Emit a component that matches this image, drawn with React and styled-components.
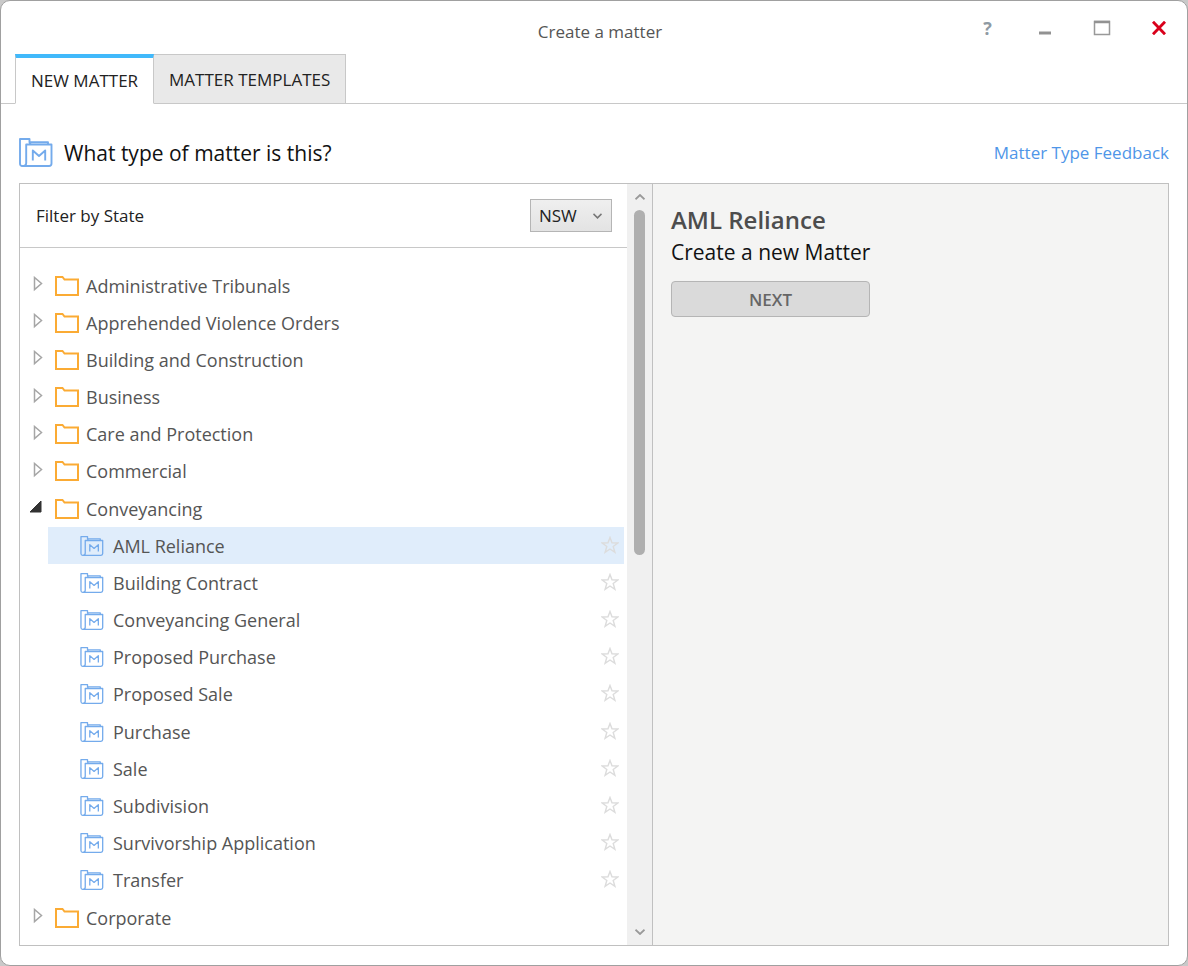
import React, { useState } from 'react'
import styled, { createGlobalStyle } from 'styled-components'

const folders = [
  { name: 'Administrative Tribunals' },
  { name: 'Apprehended Violence Orders' },
  { name: 'Building and Construction' },
  { name: 'Business' },
  { name: 'Care and Protection' },
  { name: 'Commercial' },
  {
    name: 'Conveyancing',
    matters: [
      'AML Reliance',
      'Building Contract',
      'Conveyancing General',
      'Proposed Purchase',
      'Proposed Sale',
      'Purchase',
      'Sale',
      'Subdivision',
      'Survivorship Application',
      'Transfer',
    ],
  },
  { name: 'Corporate' },
]

const MatterIcon = ({ width, height, stroke = 1.9 }) => (
  <svg width={width} height={height} viewBox="0 0 34 29" fill="none" stroke="#74abec" strokeWidth={stroke} strokeLinejoin="round" aria-hidden="true">
    <path d="M3.5 28C1.8 28 1 27 1 25.5V1h9.5v3.2H29V6.5" />
    <path d="M10.5 4.5 12 6.5h20.5v19c0 1.600-.9 2.500-2.500 2.500H3.500C6 28 7.200 27 7.200 25V6.500H30" />
    <path d="M13.800 22.500V12.500l6.200 5.500 6.200-5.500v10" />
  </svg>
)

const FolderIcon = () => (
  <svg width="24" height="20" viewBox="0 0 24 20" fill="none" stroke="#fbab34" strokeWidth="2" aria-hidden="true">
    <path d="M1 19V1h6.500l2 2.500H23V19z" />
  </svg>
)

const StarIcon = () => (
  <svg width="18" height="18" viewBox="0 0 18 18" fill="none" stroke="#dcdcdc" strokeWidth="1.400" aria-hidden="true">
    <path d="M9 1.500 11 6.800l5.800.2-4.600 3.500 1.700 5.800L9 13l-4.900 3.300 1.700-5.800L1.200 7 7 6.800z" />
  </svg>
)

const CaretIcon = ({ open }) => (
  <svg width="14" height="16" viewBox="0 0 14 16" aria-hidden="true">
    {open ? (
      <path d="M11 2v11H0z" fill="#333" stroke="#333" />
    ) : (
      <path d="M4.500 1.500v12l7-6z" fill="none" stroke="#a6a6a6" strokeWidth="1.500" />
    )}
  </svg>
)

const Chevron = ({ up, width = 10, stroke = '#777' }) => (
  <svg width={width} height="6" viewBox="0 0 10 6" fill="none" stroke={stroke} strokeWidth="1.800" aria-hidden="true">
    <path d={up ? 'M.5 5.300 5 1l4.500 4.300' : 'M.5.700 5 5 9.500.700'} />
  </svg>
)

export default function App() {
  const [tab, setTab] = useState('new')
  const [open, setOpen] = useState('Conveyancing')
  const [selected, setSelected] = useState('AML Reliance')

  return (
    <>
      <GlobalStyle />
      <Window>
        <TitleBar>
          <Title>Create a matter</Title>
          <WindowControls>
            <ControlButton aria-label="Help">?</ControlButton>
            <ControlButton aria-label="Minimise">
              <svg width="12" height="14" viewBox="0 0 12 14"><path d="M0 12h12" stroke="#929292" strokeWidth="3" /></svg>
            </ControlButton>
            <ControlButton aria-label="Maximise">
              <svg width="18" height="16" viewBox="0 0 18 16"><path d="M1.500 1.500h15v13h-15z" fill="none" stroke="#999" strokeWidth="1.500" /><path d="M1 2h16" stroke="#929292" strokeWidth="2.500" /></svg>
            </ControlButton>
            <ControlButton aria-label="Close">
              <svg width="16" height="14" viewBox="0 0 16 14"><path d="M2 .7 14 13.300M14 .7 2 13.300" stroke="#d9001b" strokeWidth="2.800" /></svg>
            </ControlButton>
          </WindowControls>
        </TitleBar>

        <Tabs role="tablist">
          <Tab role="tab" aria-selected={tab === 'new'} $active={tab === 'new'} onClick={() => setTab('new')}>
            NEW MATTER
          </Tab>
          <Tab role="tab" aria-selected={tab === 'templates'} $active={tab === 'templates'} onClick={() => setTab('templates')}>
            MATTER TEMPLATES
          </Tab>
        </Tabs>

        <Heading>
          <MatterIcon width={34} height={29} />
          <h1>What type of matter is this?</h1>
          <a href="#feedback">Matter Type Feedback</a>
        </Heading>

        <Panels>
          <Picker>
            <Filter>
              <label htmlFor="state">Filter by State</label>
              <SelectBox>
                <select id="state" defaultValue="NSW">
                  <option>NSW</option>
                  <option>VIC</option>
                  <option>QLD</option>
                </select>
                <Chevron width={9} />
              </SelectBox>
            </Filter>
            <Tree>
              {folders.map((folder) => (
                <React.Fragment key={folder.name}>
                  <Row>
                    <FolderButton
                      aria-expanded={open === folder.name}
                      onClick={() => setOpen(open === folder.name ? '' : folder.name)}
                    >
                      <Caret>
                        <CaretIcon open={open === folder.name} />
                      </Caret>
                      <FolderIcon />
                      <span>{folder.name}</span>
                    </FolderButton>
                  </Row>
                  {open === folder.name && folder.matters?.map((matter) => (
                    <Row key={matter} $nested $selected={selected === matter}>
                      <MatterButton onClick={() => setSelected(matter)}>
                        <MatterIcon width={24} height={20} />
                        <span>{matter}</span>
                      </MatterButton>
                      <StarButton aria-label={`Add ${matter} to favourites`}>
                        <StarIcon />
                      </StarButton>
                    </Row>
                  ))}
                </React.Fragment>
              ))}
            </Tree>
          </Picker>
          <ScrollBar>
            <ScrollButton aria-label="Scroll up"><Chevron up stroke="#999" /></ScrollButton>
            <Track><Thumb /></Track>
            <ScrollButton aria-label="Scroll down"><Chevron stroke="#999" /></ScrollButton>
          </ScrollBar>
          <Details>
            <h2>{selected}</h2>
            <p>Create a new Matter</p>
            <NextButton>NEXT</NextButton>
          </Details>
        </Panels>
      </Window>
    </>
  )
}

const GlobalStyle = createGlobalStyle`
  * {
    box-sizing: border-box;
  }
  body {
    margin: 0;
    background: #c9c9c9;
    font-family: 'Open Sans', 'Noto Sans', sans-serif;
    font-size: 17px;
    color: #222;
  }
  button, select {
    font: inherit;
    color: inherit;
    border: none;
    background: none;
    padding: 0;
    cursor: pointer;
  }
  svg {
    display: block;
    flex: none;
  }
`

const Window = styled.div`
  display: flex;
  flex-direction: column;
  min-height: 100vh;
  background: #fff;
  border: 1px solid #a0a0a0;
  border-radius: 10px;
`

const TitleBar = styled.header`
  display: grid;
  grid-template-columns: 1fr auto 1fr;
  align-items: center;
  height: 53px;
`

const Title = styled.div`
  grid-column: 2;
  padding: 8px 0 0 12px;
  line-height: 24px;
  color: #555;
`

const WindowControls = styled.div`
  display: flex;
  justify-content: flex-end;
`

const ControlButton = styled.button`
  display: flex;
  align-items: center;
  justify-content: center;
  width: 57px;
  height: 52px;
  font-size: 18px;
  font-weight: 700;
  color: #8f9aa3;
`

const Tabs = styled.div`
  display: flex;
  padding-left: 14px;
  border-bottom: 1px solid #c8c8c8;
`

const Tab = styled.button`
  height: 50px;
  margin-bottom: -1px;
  padding: 0 15px;
  border: 1px solid #c8c8c8;
  border-left-width: ${(props) => (props.$active ? '1px' : '0')};
  border-top: ${(props) => (props.$active ? '4px solid #41b9fb' : '1px solid #c8c8c8')};
  border-bottom-color: ${(props) => (props.$active ? '#fff' : '#c8c8c8')};
  background: ${(props) => (props.$active ? '#fff' : '#e9e9e9')};
`

const Heading = styled.div`
  display: flex;
  align-items: center;
  gap: 11px;
  height: 79px;
  padding: 18px 18px 0;
  h1 {
    flex: 1;
    margin: 0;
    font-size: 21px;
    font-weight: 400;
    line-height: 28px;
    color: #111;
  }
  a {
    color: #4f96e8;
    text-decoration: none;
  }
`

const Panels = styled.main`
  display: grid;
  grid-template-columns: minmax(0, 607fr) 25px minmax(0, 516fr);
  flex: 1;
  margin: 0 18px 19px;
  border: 1px solid #c0c0c0;
`

const Picker = styled.section`
  display: flex;
  flex-direction: column;
`

const Filter = styled.div`
  display: flex;
  align-items: center;
  justify-content: space-between;
  height: 64px;
  padding: 0 15px 0 16px;
  border-bottom: 1px solid #c8c8c8;
`

const SelectBox = styled.div`
  display: grid;
  grid-template-columns: 1fr auto;
  align-items: center;
  select {
    grid-area: 1 / 1 / 2 / 3;
    appearance: none;
    width: 82px;
    height: 33px;
    padding-left: 8px;
    border: 1px solid #b5b5b5;
    background: linear-gradient(#efefef, #e3e3e3);
  }
  svg {
    grid-area: 1 / 2;
    margin-right: 10px;
    pointer-events: none;
  }
`

const Tree = styled.div`
  display: flex;
  flex-direction: column;
  flex: 1;
  padding: 19px 3px 9px 1px;
  font-size: 18px;
`

const Row = styled.div`
  display: flex;
  align-items: center;
  flex: 1;
  min-height: 37px;
  margin-left: ${(props) => (props.$nested ? '27px' : '0')};
  padding-right: 5px;
  background: ${(props) => (props.$selected ? '#e0edfb' : 'transparent')};
  color: #555;
`

const FolderButton = styled.button`
  display: flex;
  align-items: center;
  flex: 1;
  padding-left: 9px;
  text-align: left;
  span:last-child {
    margin-left: 7px;
  }
`

const Caret = styled.span`
  width: 25px;
  padding-bottom: 3px;
`

const MatterButton = styled.button`
  display: flex;
  align-items: center;
  flex: 1;
  gap: 9px;
  padding-left: 32px;
  text-align: left;
`

const StarButton = styled.button`
  padding-bottom: 2px;
`

const ScrollBar = styled.div`
  display: flex;
  flex-direction: column;
  background: #f0f0f0;
`

const ScrollButton = styled.button`
  display: flex;
  align-items: center;
  justify-content: center;
  height: 26px;
`

const Track = styled.div`
  flex: 1;
  padding: 0 7px;
`

const Thumb = styled.div`
  width: 11px;
  height: 345px;
  border-radius: 6px;
  background: #afafaf;
`

const Details = styled.section`
  padding: 18px;
  border-left: 1px solid #c0c0c0;
  background: #f4f4f3;
  h2 {
    margin: 0;
    font-size: 24px;
    font-weight: 600;
    line-height: 35px;
    color: #4d4d4d;
  }
  p {
    margin: 0 0 13px;
    font-size: 21px;
    line-height: 31px;
    color: #111;
  }
`

const NextButton = styled.button`
  width: 199px;
  height: 36px;
  border: 1px solid #b5b5b5;
  border-radius: 4px;
  background: #dadada;
  font-weight: 600;
  color: #666;
`
